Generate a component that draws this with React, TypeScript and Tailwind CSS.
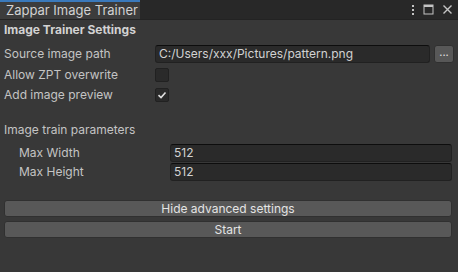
import React from "react";

const font = { fontFamily: "Inter, 'Noto Sans', sans-serif" };

function Checkbox({ checked }: { checked?: boolean }) {
  return (
    <div className="flex h-[14px] w-[14px] items-center justify-center rounded-[2px] border border-[#212121] bg-[#2a2a2a]">
      {checked && (
        <svg width="10" height="10" viewBox="0 0 10 10">
          <path d="M1.5 5.2 L4 7.5 L8.5 2.5" fill="none" stroke="#e0e0e0" strokeWidth="1.6" />
        </svg>
      )}
    </div>
  );
}

function Field({ value }: { value: string }) {
  return (
    <div className="flex h-[18px] flex-1 items-center rounded-[3px] border border-[#212121] border-t-[#0d0d0d] bg-[#2a2a2a] px-[3px] text-[12px] text-[#d2d2d2]">
      {value}
    </div>
  );
}

export default function App() {
  return (
    <div style={font} className="flex h-[272px] w-[458px] flex-col bg-[#383838] text-[12px] text-[#c4c4c4]">
      <div className="flex h-[20px] items-stretch border-b border-[#232323] bg-[#282828]">
        <div className="flex w-[140px] items-center border-t-2 border-[#3a79bb] bg-[#3c3c3c] pl-[6px] text-[13px] leading-none text-[#d2d2d2]">
          Zappar Image Trainer
        </div>
        <div className="flex flex-1 items-center justify-end gap-[8px] pr-[5px]">
          <svg width="4" height="12" viewBox="0 0 4 12">
            <rect x="1" y="1" width="2" height="2" fill="#c4c4c4" />
            <rect x="1" y="5" width="2" height="2" fill="#c4c4c4" />
            <rect x="1" y="9" width="2" height="2" fill="#c4c4c4" />
          </svg>
          <svg width="11" height="11" viewBox="0 0 11 11">
            <rect x="1" y="1" width="9" height="9" fill="none" stroke="#c4c4c4" strokeWidth="1" />
            <rect x="1" y="1" width="9" height="2" fill="#c4c4c4" />
          </svg>
          <svg width="11" height="11" viewBox="0 0 11 11">
            <path d="M1.5 1.5 L9.5 9.5 M9.5 1.5 L1.5 9.5" stroke="#c4c4c4" strokeWidth="1.4" />
          </svg>
        </div>
      </div>

      <div className="mt-[1px] flex h-[18px] items-center pl-[4px] text-[12px] font-bold text-[#d2d2d2]">Image Trainer Settings</div>

      <div className="mt-[6px] flex h-[18px] items-center pl-[4px] pr-[4px]">
        <div className="w-[151px]">Source image path</div>
        <Field value="C:/Users/xxx/Pictures/pattern.png" />
        <div className="ml-[4px] flex h-[18px] w-[20px] items-center justify-center rounded-[3px] border border-[#303030] bg-[#585858] pb-[4px] text-[11px] text-[#e0e0e0]">
          ...
        </div>
      </div>

      <div className="mt-[3px] flex h-[18px] items-center pl-[4px]">
        <div className="w-[151px]">Allow ZPT overwrite</div>
        <Checkbox />
      </div>

      <div className="mt-[2px] flex h-[18px] items-center pl-[4px]">
        <div className="w-[151px]">Add image preview</div>
        <Checkbox checked />
      </div>

      <div className="mt-[17px] flex h-[18px] items-center pl-[4px]">Image train parameters</div>

      <div className="mt-[5px] flex h-[18px] items-center pl-[19px] pr-[6px]">
        <div className="w-[151px]">Max Width</div>
        <Field value="512" />
      </div>
      <div className="mt-[1px] flex h-[18px] items-center pl-[19px] pr-[6px]">
        <div className="w-[151px]">Max Height</div>
        <Field value="512" />
      </div>

      <div className="mt-[19px] flex flex-col gap-[4px] px-[4px] pr-[6px]">
        <div className="flex h-[17px] items-center justify-center rounded-[3px] border border-[#303030] bg-[#585858] text-[12px] text-[#e4e4e4]">
          Hide advanced settings
        </div>
        <div className="flex h-[17px] items-center justify-center rounded-[3px] border border-[#303030] bg-[#585858] text-[12px] text-[#e4e4e4]">
          Start
        </div>
      </div>
    </div>
  );
}
